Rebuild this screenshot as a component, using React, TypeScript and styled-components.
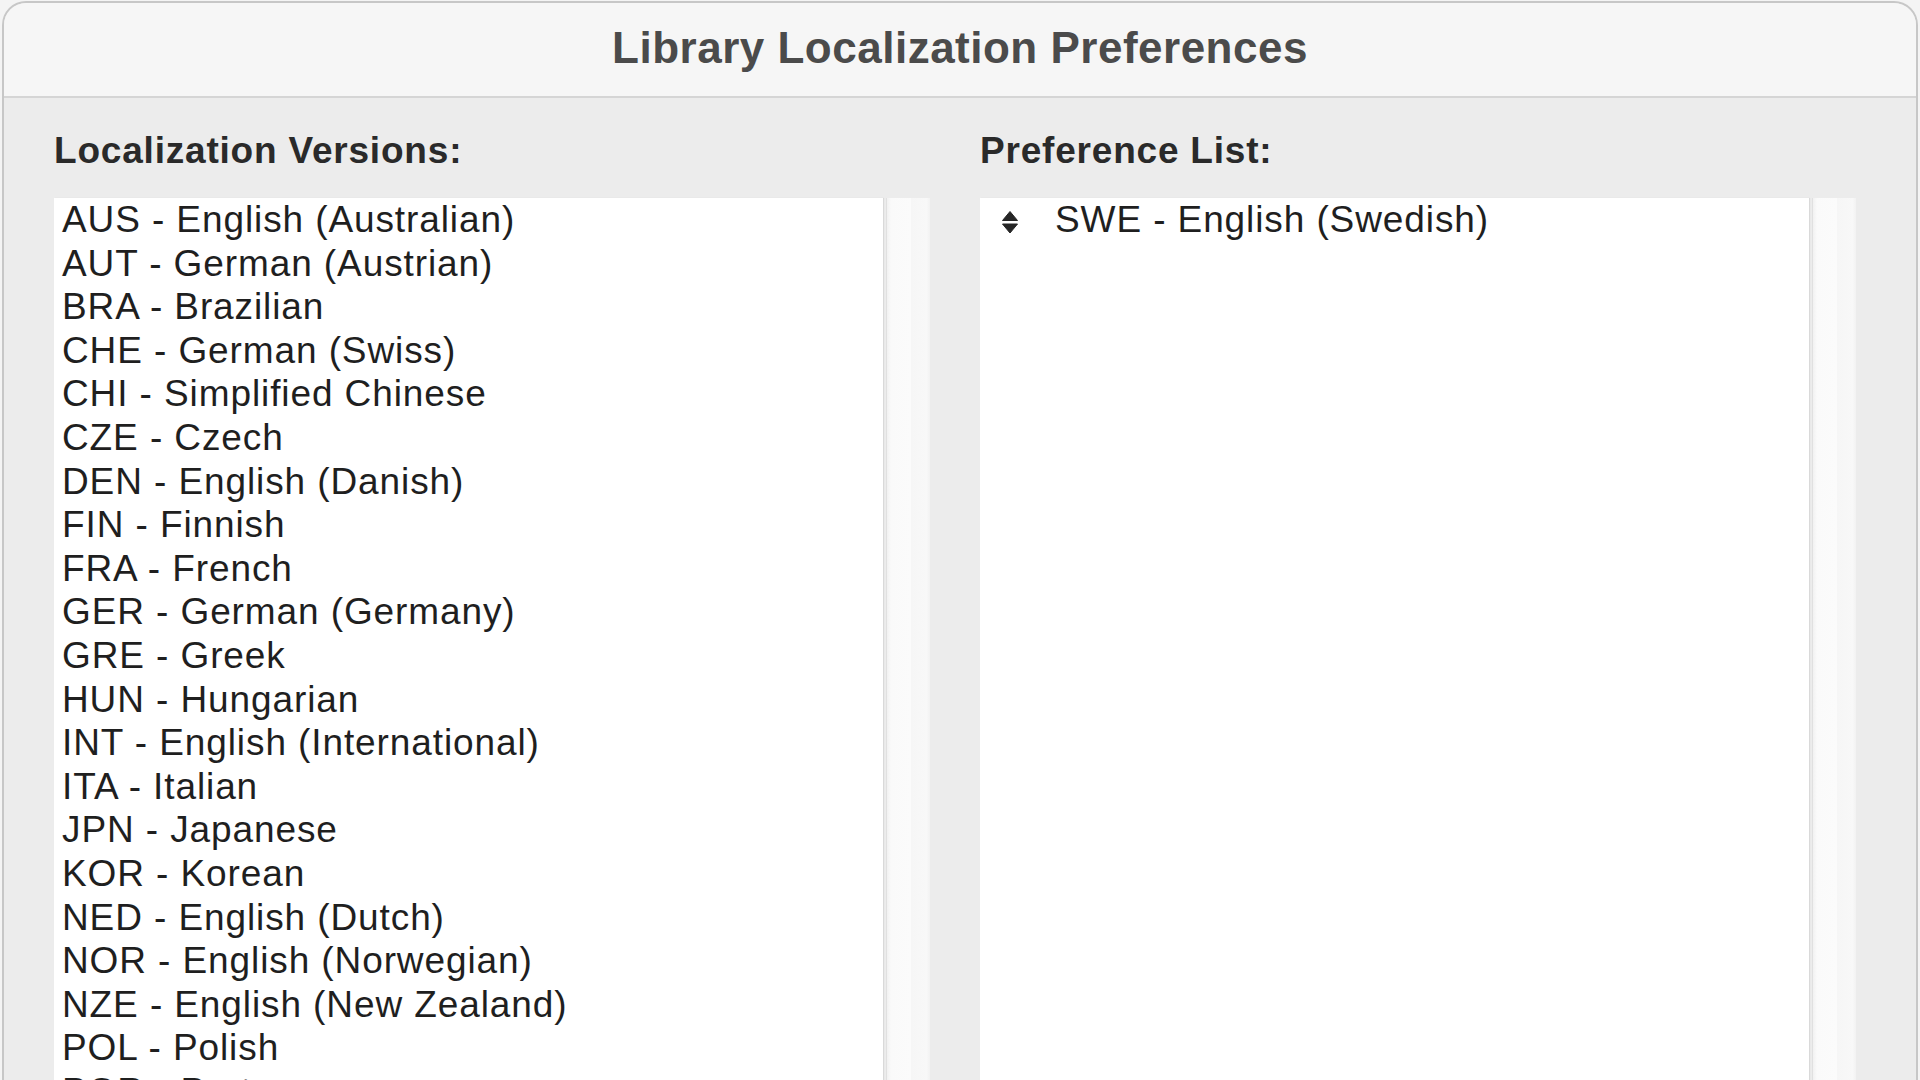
import { createGlobalStyle, styled } from "styled-components";

const GlobalStyle = createGlobalStyle`
  html, body {
    margin: 0;
    padding: 0;
    background: #f4f4f4;
    overflow: hidden;
  }
  body {
    font-family: "Liberation Sans", Arial, sans-serif;
  }
`;

const Window = styled.div`
  margin: 1px 2px 0 2px;
  height: 1120px;
  border: 2px solid #c7c7c7;
  border-bottom: none;
  border-radius: 24px 24px 0 0;
  background: #ececec;
  overflow: hidden;
  display: flex;
  flex-direction: column;
`;

const TitleBar = styled.div`
  height: 95px;
  box-sizing: border-box;
  flex-shrink: 0;
  background: #f6f6f6;
  border-bottom: 2px solid #d5d5d5;
  display: flex;
  align-items: center;
  justify-content: center;
  padding-bottom: 3px;
`;

const Title = styled.h1`
  margin: 0;
  font-size: 44px;
  line-height: 44px;
  font-weight: bold;
  color: #4b4b4b;
  letter-spacing: 0.5px;
`;

const Body = styled.div`
  flex: 1;
  display: grid;
  grid-template-columns: 1fr 1fr;
  column-gap: 50px;
  padding: 31px 60px 0 50px;
  min-height: 0;
`;

const Column = styled.section`
  display: flex;
  flex-direction: column;
  min-height: 0;
`;

const Label = styled.h2`
  margin: 0 0 25px 0;
  font-size: 37px;
  line-height: 44px;
  font-weight: bold;
  letter-spacing: 0.8px;
  color: #2a2a2a;
`;

const ListFrame = styled.div`
  flex: 1;
  display: flex;
  gap: 3px;
  min-height: 0;
`;

const ListBox = styled.ul`
  flex: 1;
  margin: 0;
  padding: 0;
  list-style: none;
  background: #ffffff;
  box-shadow: 1px 0 1px rgba(0, 0, 0, 0.08);
  overflow: hidden;
`;

const ScrollTrack = styled.div`
  width: 44px;
  flex-shrink: 0;
  box-sizing: border-box;
  border-left: 1px solid #e0e0e0;
  background: linear-gradient(
    to right,
    #f1f1f1 0,
    #fafafa 4px,
    #fbfbfb 55%,
    #f6f6f6 56%,
    #f8f8f8 92%,
    #f2f2f2 100%
  );
`;

const Item = styled.li<{ $sortable?: boolean }>`
  display: flex;
  align-items: center;
  gap: 36px;
  padding-left: ${(p) => (p.$sortable ? "21px" : "8px")};
  font-size: 37px;
  line-height: 43.6px;
  letter-spacing: 0.9px;
  color: #1f1f1f;
  white-space: nowrap;
`;

const Handle = styled.svg`
  width: 18px;
  height: 24px;
  margin-top: 4px;
  flex-shrink: 0;
`;

const versions = [
  "AUS - English (Australian)",
  "AUT - German (Austrian)",
  "BRA - Brazilian",
  "CHE - German (Swiss)",
  "CHI - Simplified Chinese",
  "CZE - Czech",
  "DEN - English (Danish)",
  "FIN - Finnish",
  "FRA - French",
  "GER - German (Germany)",
  "GRE - Greek",
  "HUN - Hungarian",
  "INT - English (International)",
  "ITA - Italian",
  "JPN - Japanese",
  "KOR - Korean",
  "NED - English (Dutch)",
  "NOR - English (Norwegian)",
  "NZE - English (New Zealand)",
  "POL - Polish",
  "POR - Portuguese",
  "RUS - Russian",
];

const preferences = ["SWE - English (Swedish)"];

const SortHandle = () => (
  <Handle viewBox="0 0 18 24">
    <path d="M9 1.5 L16.5 10.5 L1.5 10.5 Z" fill="#262626" strokeLinejoin="round" stroke="#262626" strokeWidth="1" />
    <path d="M9 23 L16.5 14 L1.5 14 Z" fill="#262626" strokeLinejoin="round" stroke="#262626" strokeWidth="1" />
  </Handle>
);

const App = () => {
  return (
    <>
      <GlobalStyle />
      <Window>
        <TitleBar>
          <Title>Library Localization Preferences</Title>
        </TitleBar>
        <Body>
          <Column>
            <Label>Localization Versions:</Label>
            <ListFrame>
              <ListBox>
                {versions.map((v) => (
                  <Item key={v}>{v}</Item>
                ))}
              </ListBox>
              <ScrollTrack />
            </ListFrame>
          </Column>
          <Column>
            <Label>Preference List:</Label>
            <ListFrame>
              <ListBox>
                {preferences.map((p) => (
                  <Item key={p} $sortable>
                    <SortHandle />
                    <span>{p}</span>
                  </Item>
                ))}
              </ListBox>
              <ScrollTrack />
            </ListFrame>
          </Column>
        </Body>
      </Window>
    </>
  );
};

export default App;
